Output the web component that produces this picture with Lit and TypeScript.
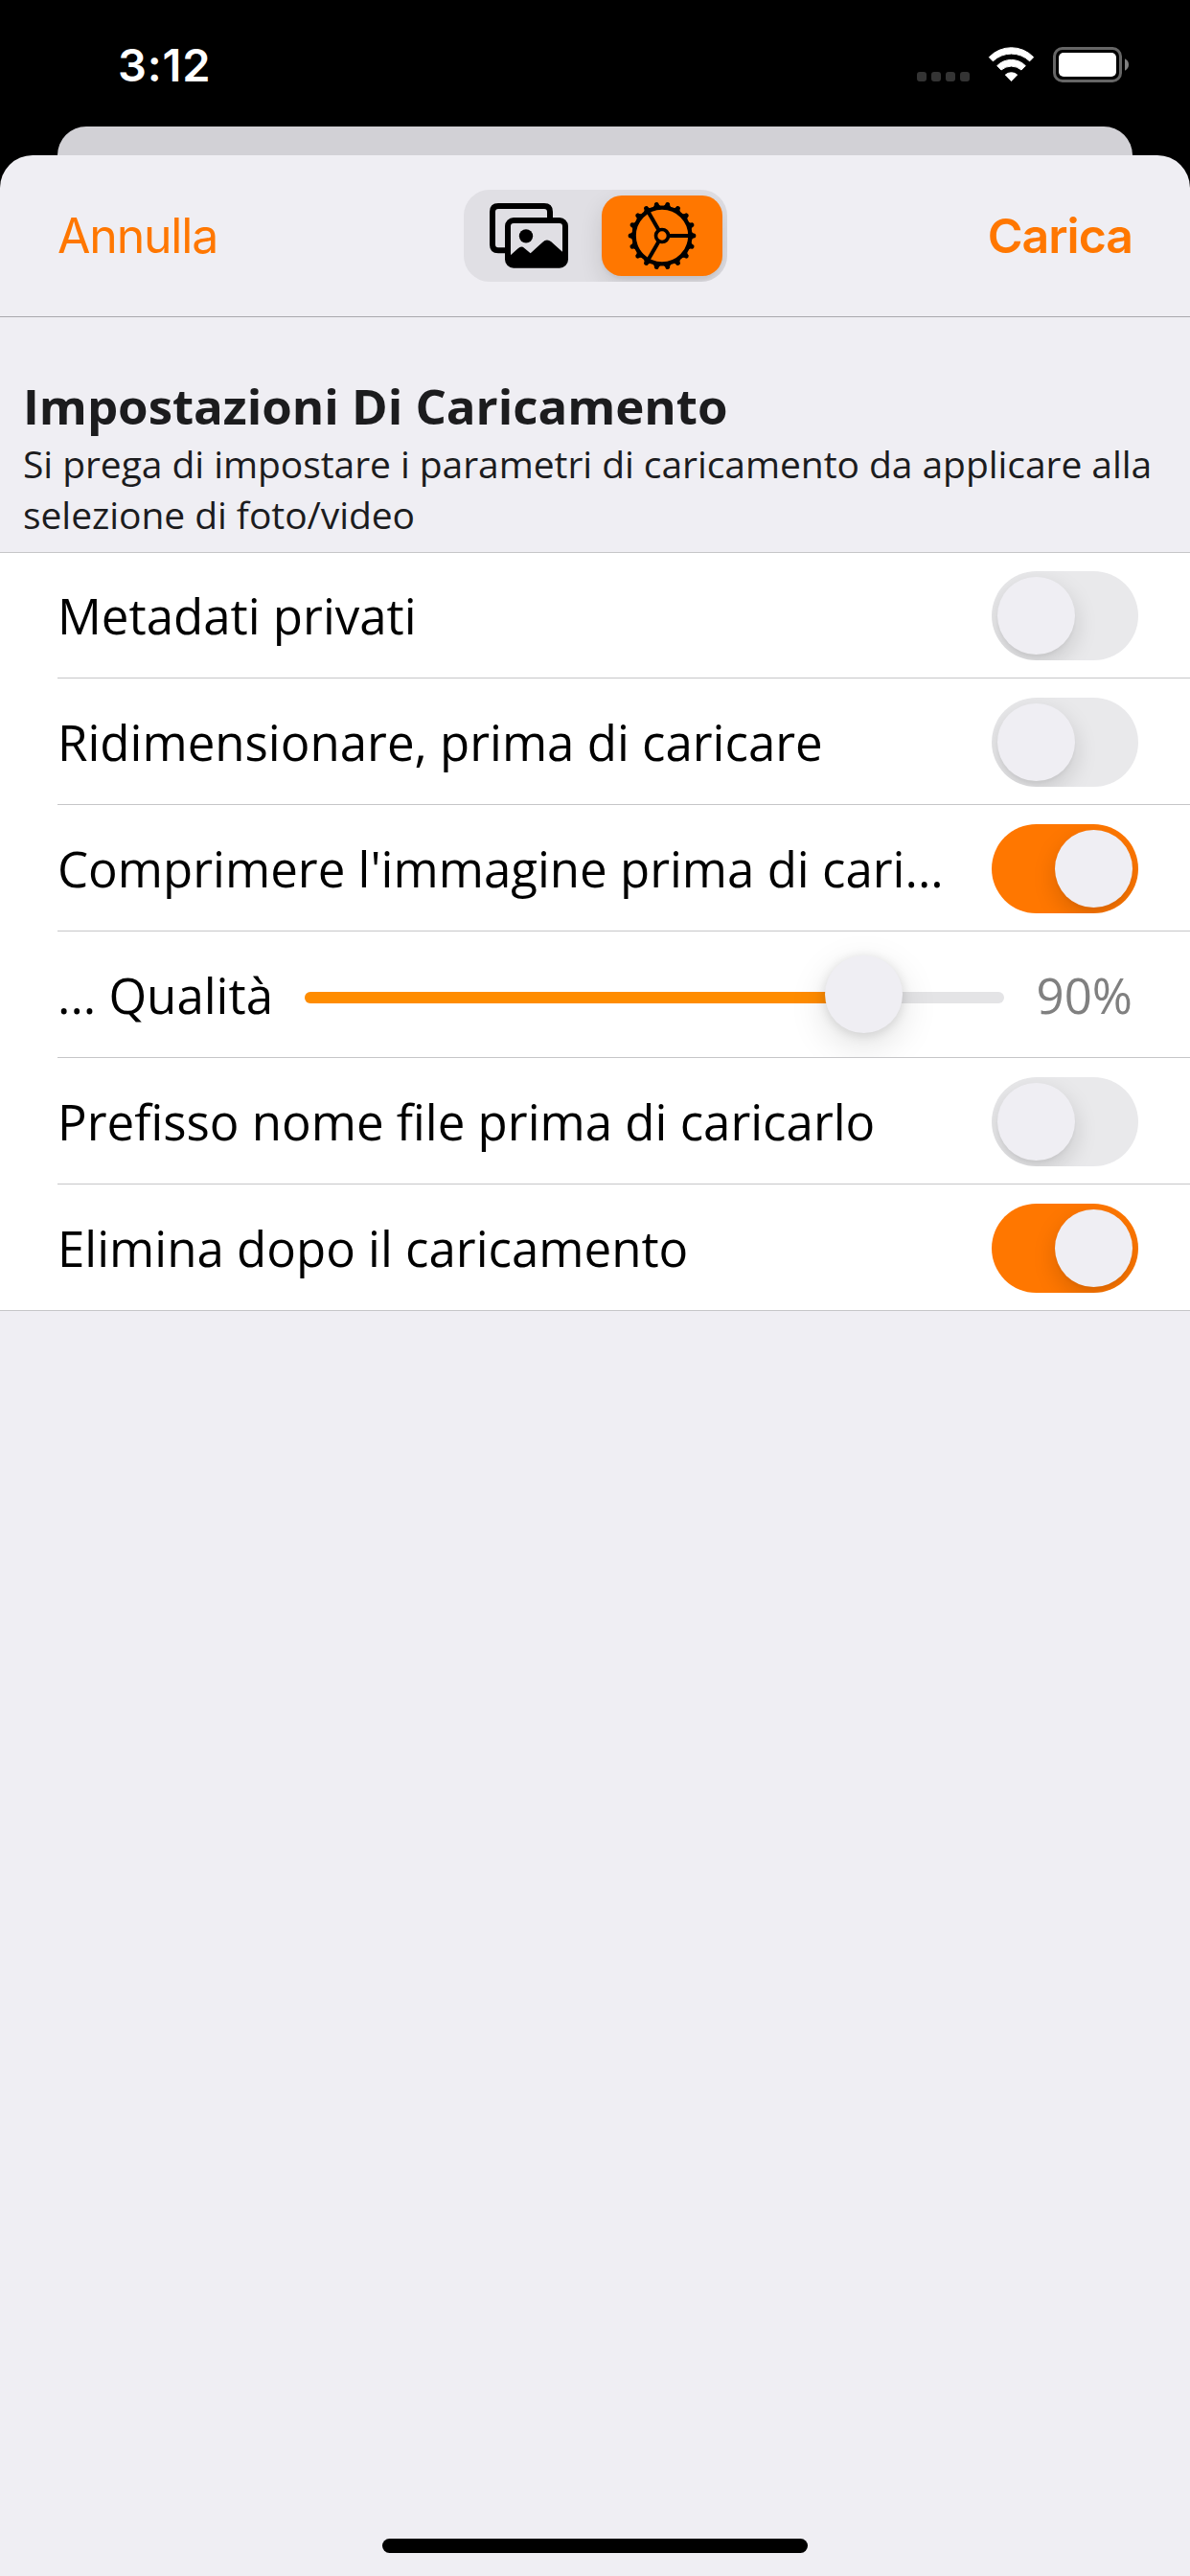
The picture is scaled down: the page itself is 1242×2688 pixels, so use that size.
import { LitElement, html, css, svg } from "lit";
import { customElement, property, state } from "lit/decorators.js";

@customElement("toggle-switch")
export class ToggleSwitch extends LitElement {
  @property({ type: Boolean, reflect: true }) on = false;

  static styles = css`
    :host {
      display: block;
      flex: none;
    }
    .track {
      box-sizing: border-box;
      width: 153px;
      height: 93px;
      padding: 6px;
      border-radius: 46.5px;
      background: #e9e9eb;
      overflow: hidden;
      display: flex;
      justify-content: flex-start;
    }
    :host([on]) .track {
      background: #ff7700;
      justify-content: flex-end;
    }
    .knob {
      width: 81px;
      height: 81px;
      border-radius: 50%;
      background: #efeef3;
      box-shadow: 0 9px 24px rgba(0, 0, 0, 0.15), 0 3px 3px rgba(0, 0, 0, 0.03);
    }
  `;

  render() {
    return html`<div class="track"><div class="knob"></div></div>`;
  }
}

@customElement("quality-slider")
export class QualitySlider extends LitElement {
  /** Filled share of the track, in percent. */
  @property({ type: Number }) position = 0;

  static styles = css`
    :host {
      display: flex;
      align-items: center;
      height: 81px;
    }
    .track {
      position: relative;
      width: 730px;
      height: 12px;
      margin-top: 5px;
      border-radius: 6px;
      background: #e4e4e6;
    }
    .fill {
      height: 12px;
      border-radius: 6px 0 0 6px;
      background: #ff8c00;
    }
    .knob {
      position: absolute;
      top: -38px;
      width: 81px;
      height: 81px;
      margin-left: -40.5px;
      border-radius: 50%;
      background: #efeef3;
      box-shadow: 0 12px 39px rgba(0, 0, 0, 0.13), 0 2px 12px rgba(0, 0, 0, 0.12);
    }
  `;

  render() {
    return html`<div class="track">
      <div class="fill" style="width:${this.position}%"></div>
      <div class="knob" style="left:${this.position}%"></div>
    </div>`;
  }
}

interface Setting {
  label: string;
  on: boolean;
  quality?: string;
}

const TEETH = Array.from({ length: 18 }, (_, i) => i * 20);
const SPOKES = [0, 120, 240];

@customElement("app-root")
export class AppRoot extends LitElement {
  @state() private settings: Setting[] = [
    { label: "Metadati privati", on: false },
    { label: "Ridimensionare, prima di caricare", on: false },
    { label: "Comprimere l'immagine prima di cari...", on: true },
    { label: "... Qualità", on: false, quality: "90%" },
    { label: "Prefisso nome file prima di caricarlo", on: false },
    { label: "Elimina dopo il caricamento", on: true },
  ];

  static styles = css`
    :host {
      display: block;
    }
    .screen {
      display: flex;
      flex-direction: column;
      width: 1242px;
      height: 2688px;
      background: #000;
      overflow: hidden;
      font-family: "Open Sans", "Noto Sans", sans-serif;
    }
    .status {
      box-sizing: border-box;
      display: flex;
      justify-content: space-between;
      align-items: flex-start;
      height: 132px;
      padding: 49px 64px 0 123px;
    }
    .time {
      margin-top: -10px;
      font: 600 47px/58px Inter, sans-serif;
      letter-spacing: 0.8px;
      color: #fff;
    }
    .status-icons {
      display: block;
      width: 221px;
      height: 37px;
    }
    .back-sheet {
      height: 30px;
      margin: 0 60px;
      border-radius: 32px 32px 0 0;
      background: #d2d1d6;
    }
    .sheet {
      flex: 1;
      display: flex;
      flex-direction: column;
      border-radius: 34px 34px 0 0;
      background: #efeef3;
      overflow: hidden;
    }
    .nav {
      box-sizing: border-box;
      display: grid;
      grid-template-columns: 484px 275px 1fr;
      align-items: center;
      height: 169px;
      border-bottom: 1px solid #a9a8ad;
      font: 400 50px/60px Inter, sans-serif;
      color: #ff7700;
    }
    .cancel {
      padding-left: 60px;
      letter-spacing: -1.2px;
    }
    .submit {
      padding-right: 60px;
      text-align: right;
      font-weight: 600;
      letter-spacing: -1px;
    }
    .segments {
      box-sizing: border-box;
      display: flex;
      justify-content: space-between;
      height: 96px;
      padding: 6px 5px 6px 6px;
      border-radius: 27px;
      background: #e0dfe4;
      overflow: hidden;
    }
    .segment {
      display: flex;
      align-items: center;
      justify-content: center;
      width: 126px;
      height: 84px;
      border-radius: 21px;
    }
    .segment.active {
      background: #ff7700;
      box-shadow: 0 9px 24px rgba(0, 0, 0, 0.12), 0 3px 3px rgba(0, 0, 0, 0.04);
    }
    .photos {
      width: 82px;
      height: 68px;
      margin-right: 2px;
    }
    .gear {
      width: 74px;
      height: 74px;
    }
    .intro {
      box-sizing: border-box;
      height: 245px;
      padding: 57px 24px 0;
      color: #1c1c1e;
    }
    .title {
      margin: 0;
      font-size: 51px;
      line-height: 70px;
      font-weight: 700;
      letter-spacing: -0.04px;
    }
    .hint {
      margin: -1px 0 0;
      font-size: 39px;
      line-height: 53px;
      letter-spacing: -0.06px;
    }
    .list {
      border-top: 1px solid #c6c6c8;
      border-bottom: 1px solid #c6c6c8;
      background: #fff;
    }
    .row {
      box-sizing: border-box;
      display: flex;
      align-items: center;
      justify-content: space-between;
      height: 132px;
      margin-left: 60px;
      padding: 2px 54px 0 0;
      border-bottom: 1px solid #c6c6c8;
      overflow: hidden;
    }
    .row:first-child,
    .row:last-child {
      height: 131px;
    }
    .row:first-child {
      padding-top: 1px;
    }
    .row:last-child {
      border-bottom: none;
    }
    .row.slider {
      padding-right: 60px;
    }
    .label,
    .value {
      font-size: 51px;
      line-height: 70px;
      margin-bottom: 1px;
      white-space: nowrap;
      color: #000;
    }
    .value {
      color: #808080;
    }
    .home {
      width: 444px;
      height: 15px;
      margin: auto auto 24px;
      border-radius: 8px;
      background: #000;
    }
  `;

  private renderStatusIcons() {
    return html`<svg class="status-icons" viewBox="171 147 663 111">
      <g fill="#343434">
        <rect x="171" y="225" width="30" height="30" rx="9" />
        <rect x="216" y="225" width="30" height="30" rx="9" />
        <rect x="261" y="225" width="30" height="30" rx="9" />
        <rect x="306" y="225" width="30" height="30" rx="9" />
      </g>
      <g fill="#fff" stroke="#fff" stroke-width="3" stroke-linejoin="round">
        <path d="M397 179A96 96 0 0 1 536 179L524 191.500A83 83 0 0 0 409 191.500Z" />
        <path d="M422 206A62 62 0 0 1 511 206L498 219A48 48 0 0 0 435 219Z" />
        <path d="M448 234A29 29 0 0 1 485 234L466.500 253.500Z" />
      </g>
      <rect x="601.500" y="151.500" width="207" height="102" rx="25" fill="none" stroke="#666" stroke-width="9" />
      <rect x="615" y="165" width="180" height="75" rx="15" fill="#fff" />
      <path d="M822 184Q834 190 834 202.500T822 221Z" fill="#808080" />
    </svg>`;
  }

  private renderPhotos() {
    return html`<svg class="photos" viewBox="123 97 246 204">
      <g fill="none" stroke="#000" stroke-width="18">
        <path d="M312 145V124Q312 106 294 106H150Q132 106 132 124V227Q132 245 150 245H172" />
        <rect x="180" y="151" width="180" height="140" rx="18" />
      </g>
      <circle cx="237" cy="200" r="21.500" />
      <path d="M186 262L212 239Q222 229 232 238L251 254L289 219Q302 207 316 218L356 254V292H186Z" />
    </svg>`;
  }

  private renderGear() {
    return html`<svg class="gear" viewBox="-111 -111 222 222">
      <circle r="88" fill="none" stroke="#000" stroke-width="13" />
      <circle r="19.500" fill="none" stroke="#000" stroke-width="11" />
      ${TEETH.map(
        (a) => svg`<path transform="rotate(${a})" d="M88 -16L97 -8L104 -6Q109 0 104 6L97 8L88 16Z" />`
      )}
      ${SPOKES.map(
        (a) => svg`<path transform="rotate(${a})" d="M22 0H86" stroke="#000" stroke-width="12" />`
      )}
    </svg>`;
  }

  private renderRow(item: Setting) {
    if (item.quality) {
      return html`<div class="row slider">
        <div class="label">${item.label}</div>
        <quality-slider .position=${79.93}></quality-slider>
        <div class="value">${item.quality}</div>
      </div>`;
    }
    return html`<div class="row">
      <div class="label">${item.label}</div>
      <toggle-switch ?on=${item.on}></toggle-switch>
    </div>`;
  }

  render() {
    return html`<div class="screen">
      <div class="status">
        <div class="time">3:12</div>
        ${this.renderStatusIcons()}
      </div>
      <div class="back-sheet"></div>
      <div class="sheet">
        <div class="nav">
          <div class="cancel">Annulla</div>
          <div class="segments">
            <div class="segment">${this.renderPhotos()}</div>
            <div class="segment active">${this.renderGear()}</div>
          </div>
          <div class="submit">Carica</div>
        </div>
        <div class="intro">
          <h1 class="title">Impostazioni Di Caricamento</h1>
          <p class="hint">
            Si prega di impostare i parametri di caricamento da applicare alla selezione di foto/video
          </p>
        </div>
        <div class="list">${this.settings.map((item) => this.renderRow(item))}</div>
        <div class="home"></div>
      </div>
    </div>`;
  }
}
